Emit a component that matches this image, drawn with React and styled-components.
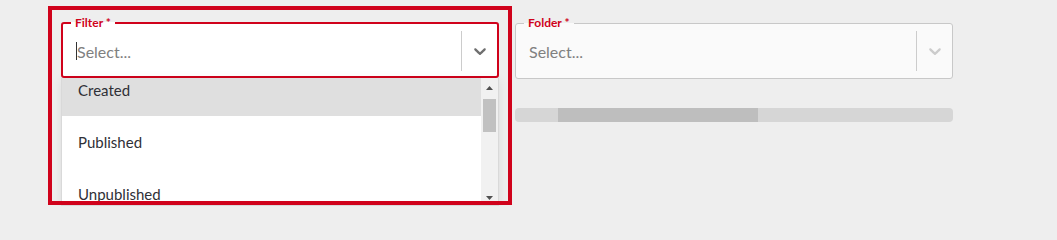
import React, { useLayoutEffect, useRef } from "react";
import styled, { createGlobalStyle } from "styled-components";

const RED = "#d0021b";
const PAGE = "#eeeeee";

const Global = createGlobalStyle`
  html, body { margin: 0; padding: 0; background: ${PAGE}; height: 206px; overflow: hidden; }
  body { font-family: Lato, "Noto Sans", "Liberation Sans", sans-serif; }
  * { box-sizing: border-box; }
`;

const Page = styled.div`
  display: flex;
  align-items: flex-start;
  gap: 3px;
  padding: 6px 0 0 48px;
  height: 206px;
  overflow: hidden;
`;

const Highlight = styled.div`
  position: relative;
  width: 464px;
  height: 199px;
  padding: 16px 13px 0;
  &::after {
    content: "";
    position: absolute;
    inset: 0;
    border: 4px solid ${RED};
    pointer-events: none;
    z-index: 5;
  }
`;

const Field = styled.div`
  position: relative;
  width: 438px;
`;

const Control = styled.div`
  position: relative;
  display: flex;
  align-items: center;
  height: 56px;
  padding-top: ${(p) => (p.$focused ? "2px" : "0")};
  border: ${(p) => (p.$focused ? `2px solid ${RED}` : "1px solid #c8c8c8")};
  border-radius: 3px;
  background: ${(p) => (p.$focused ? "#ffffff" : "#fafafa")};
`;

const Legend = styled.span`
  position: absolute;
  top: -7px;
  left: 8px;
  padding: 0 4px;
  font-size: 12px;
  line-height: 12px;
  font-weight: 700;
  color: ${RED};
  background: linear-gradient(
    to bottom,
    ${PAGE} 0,
    ${PAGE} ${(p) => (p.$focused ? "5px" : "6px")},
    ${(p) => (p.$focused ? "#ffffff" : "#fafafa")} ${(p) => (p.$focused ? "5px" : "6px")}
  );
`;

const Value = styled.div`
  flex: 1;
  display: flex;
  align-items: center;
  padding: 1px 0 0 13px;
  height: 100%;
`;

const Caret = styled.span`
  width: 1px;
  height: 18px;
  margin-top: -1px;
  background: #333333;
`;

const Placeholder = styled.span`
  font-size: 16px;
  color: #808080;
`;

const Separator = styled.span`
  width: 1px;
  height: 40px;
  background: #cccccc;
`;

const Indicator = styled.div`
  width: 35px;
  display: flex;
  align-items: center;
  justify-content: center;
  color: ${(p) => (p.$focused ? "#6f6f6f" : "#cccccc")};
  svg { display: block; }
`;

const Menu = styled.div`
  position: absolute;
  top: 100%;
  left: 0;
  width: 438px;
  height: 128px;
  display: flex;
  background: #ffffff;
  border: 1px solid #d9d9d9;
  border-top: none;
  box-shadow: 0 2px 10px rgba(0, 0, 0, 0.08);
  z-index: 2;
`;

const List = styled.div`
  flex: 1;
  overflow: hidden;
`;

const Option = styled.div`
  height: 52px;
  display: flex;
  align-items: center;
  padding-left: 16px;
  font-size: 15px;
  color: #2f3036;
  background: ${(p) => (p.$active ? "#dfdfdf" : "#ffffff")};
`;

const Scrollbar = styled.div`
  width: 17px;
  display: flex;
  flex-direction: column;
  background: #f1f1f1;
`;

const ArrowButton = styled.div`
  height: 17px;
  display: flex;
  justify-content: center;
  padding-top: 8px;
  svg { display: block; }
`;

const Track = styled.div`
  flex: 1;
  padding: 4px 2px 0;
`;

const Thumb = styled.div`
  height: 33px;
  background: #c1c1c1;
`;

const RightColumn = styled.div`
  display: flex;
  flex-direction: column;
  gap: 29px;
  width: 438px;
  margin-top: 17px;
`;

const Progress = styled.div`
  height: 14px;
  border-radius: 4px;
  background: #d6d6d6;
  padding-left: 43px;
  display: flex;
  overflow: hidden;
`;

const ProgressFill = styled.div`
  width: 200px;
  background: #bebebe;
`;

const Chevron = () => (
  <svg width="20" height="20" viewBox="0 0 20 20" fill="currentColor" aria-hidden="true">
    <path d="M4.516 7.548c0.436-0.446 1.043-0.481 1.576 0l3.908 3.747 3.908-3.747c0.533-0.481 1.141-0.446 1.574 0 0.436 0.445 0.408 1.197 0 1.615-0.406 0.418-4.695 4.502-4.695 4.502-0.217 0.223-0.502 0.335-0.787 0.335s-0.57-0.112-0.789-0.335c0 0-4.287-4.084-4.695-4.502s-0.436-1.17 0-1.615z" />
  </svg>
);

const Tri = ({ down }) => (
  <svg width="7" height="4" viewBox="0 0 7 4" aria-hidden="true">
    <path d={down ? "M0 0h7L3.5 4z" : "M3.5 0L7 4H0z"} fill="#505050" />
  </svg>
);

const OPTIONS = ["Created", "Published", "Unpublished"];

function Select({ label, focused, open }) {
  const listRef = useRef(null);
  useLayoutEffect(() => {
    if (listRef.current) listRef.current.scrollTop = 14;
  }, []);
  return (
    <Field>
      <Control $focused={focused}>
        <Legend $focused={focused}>{label} *</Legend>
        <Value>
          {focused && <Caret />}
          <Placeholder>Select...</Placeholder>
        </Value>
        <Separator />
        <Indicator $focused={focused}>
          <Chevron />
        </Indicator>
      </Control>
      {open && (
        <Menu>
          <List ref={listRef}>
            {OPTIONS.map((o, i) => (
              <Option key={o} $active={i === 0}>
                {o}
              </Option>
            ))}
          </List>
          <Scrollbar>
            <ArrowButton>
              <Tri />
            </ArrowButton>
            <Track>
              <Thumb />
            </Track>
            <ArrowButton>
              <Tri down />
            </ArrowButton>
          </Scrollbar>
        </Menu>
      )}
    </Field>
  );
}

export default function App() {
  return (
    <>
      <Global />
      <Page>
        <Highlight>
          <Select label="Filter" focused open />
        </Highlight>
        <RightColumn>
          <Select label="Folder" />
          <Progress>
            <ProgressFill />
          </Progress>
        </RightColumn>
      </Page>
    </>
  );
}
